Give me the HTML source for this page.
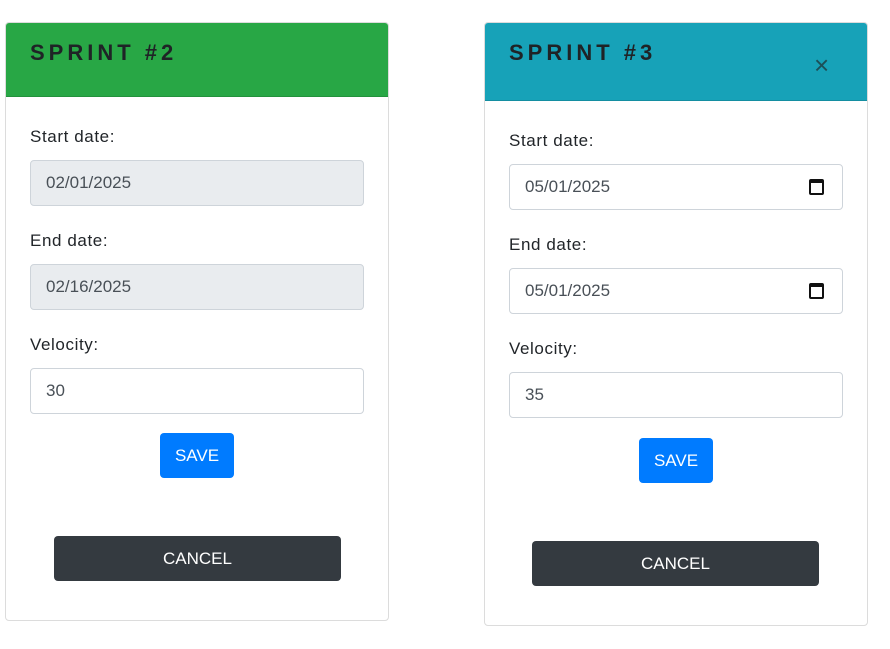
<!DOCTYPE html>
<html><head><style>
*{box-sizing:border-box;margin:0;padding:0}
body{width:890px;height:649px;background:#fff;font-family:"Liberation Sans",sans-serif;position:relative;overflow:hidden}
.card{position:absolute;border:1px solid #dcdcdc;border-radius:4px;overflow:hidden;background:#fff}
.hdr{position:absolute;left:0;top:0;right:0;border-bottom:1px solid rgba(0,0,0,.12)}
.t{position:absolute;left:24px;top:17px;font-size:22px;letter-spacing:4px;color:#1f2326;font-weight:bold}
.a{position:absolute}
.lbl{font-size:17px;color:#212529;letter-spacing:.6px}
.in{border:1px solid #ced4da;border-radius:4px;height:46px;width:334px;font-size:17px;color:#495057;padding:12px 15px;background:#fff}
.dis{background:#e9ecef}
.save{background:#007bff;color:#fff;font-size:17px;border-radius:4px;width:74px;height:45px;text-align:center;line-height:45px}
.cancel{background:#343a40;color:#fff;font-size:17px;border-radius:4px;width:287px;height:45px;text-align:center;line-height:45px}
.cal{position:absolute;right:18px;top:14px;width:15px;height:16px;border:2px solid #111;border-top-width:4px;border-radius:2px}
</style></head><body>
<div class="card" style="left:5px;top:22px;width:384px;height:599px">
 <div class="hdr" style="height:74px;background:#28a745"><div class="t">SPRINT #2</div></div>
 <div class="a lbl" style="left:24px;top:104px">Start date:</div>
 <div class="a in dis" style="left:24px;top:137px">02/01/2025</div>
 <div class="a lbl" style="left:24px;top:208px">End date:</div>
 <div class="a in dis" style="left:24px;top:241px">02/16/2025</div>
 <div class="a lbl" style="left:24px;top:312px">Velocity:</div>
 <div class="a in" style="left:24px;top:345px">30</div>
 <div class="a save" style="left:154px;top:410px">SAVE</div>
 <div class="a cancel" style="left:48px;top:513px">CANCEL</div>
</div>
<div class="card" style="left:484px;top:22px;width:384px;height:604px">
 <div class="hdr" style="height:78px;background:#17a2b8"><div class="t">SPRINT #3</div>
  <div class="a" style="left:329px;top:30px;font-size:26px;color:#1c4f57;line-height:24px">×</div></div>
 <div class="a lbl" style="left:24px;top:108px">Start date:</div>
 <div class="a in" style="left:24px;top:141px">05/01/2025<span class="cal"></span></div>
 <div class="a lbl" style="left:24px;top:212px">End date:</div>
 <div class="a in" style="left:24px;top:245px">05/01/2025<span class="cal"></span></div>
 <div class="a lbl" style="left:24px;top:316px">Velocity:</div>
 <div class="a in" style="left:24px;top:349px">35</div>
 <div class="a save" style="left:154px;top:415px">SAVE</div>
 <div class="a cancel" style="left:47px;top:518px">CANCEL</div>
</div>
</body></html>
